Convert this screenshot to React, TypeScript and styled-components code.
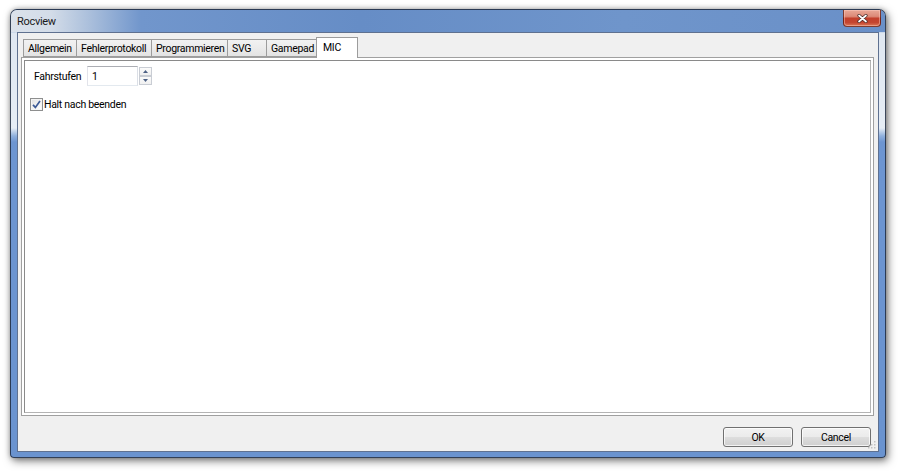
import React from 'react';
import styled, { createGlobalStyle } from 'styled-components';

const Global = createGlobalStyle`
  html, body { margin: 0; padding: 0; background: #ffffff; }
  body {
    font-family: Roboto, "Liberation Sans", sans-serif;
    font-size: 10.5px;
    letter-spacing: -0.3px;
    color: #000;
  }
  * { box-sizing: border-box; }
`;

const Page = styled.div`
  width: 900px;
  height: 472px;
  overflow: hidden;
  padding: 9px 0 0 10px;
`;

const Window = styled.div`
  width: 876px;
  height: 449px;
  display: flex;
  flex-direction: column;
  border: 1px solid rgba(30, 42, 62, 0.85);
  border-radius: 7px 7px 4px 4px;
  background: linear-gradient(
    180deg,
    #9fb6d6 0px,
    #b9cbe2 22px,
    #dfe7f1 23px,
    #e6edf5 118px,
    #8fb0dd 126px,
    #6d95d1 132px,
    #6a93cf 100%
  );
  box-shadow: 2px 3px 9px rgba(0, 0, 0, 0.5), 0 0 5px rgba(0, 0, 0, 0.25);
`;

const TitleBar = styled.div`
  height: 22px;
  flex: none;
  display: flex;
  align-items: flex-start;
  justify-content: space-between;
  border-radius: 6px 6px 0 0;
  background: linear-gradient(
    90deg,
    #dbe2eb 0px,
    #d3dce8 40px,
    #a9bedb 80px,
    #7196cc 130px,
    #668dc6 40%,
    #6f95cb 70%,
    #6a90c8 100%
  );
`;

const Title = styled.span`
  padding: 5px 0 0 6px;
  font-size: 11px;
  color: #1a1a1a;
`;

const CloseButton = styled.div`
  width: 38px;
  height: 17px;
  margin-right: 4px;
  display: flex;
  align-items: center;
  justify-content: center;
  border: 1px solid rgba(90, 25, 15, 0.75);
  border-top: none;
  border-radius: 0 0 4px 4px;
  background: linear-gradient(
    180deg,
    #e9a897 0%,
    #dc8a78 40%,
    #c3402c 52%,
    #c44530 78%,
    #dc7656 100%
  );
  box-shadow: inset 0 0 0 1px rgba(255, 210, 200, 0.45);
`;

const Middle = styled.div`
  flex: 1;
  display: flex;
  padding: 0 6px 5px 6px;
`;

const Client = styled.div`
  position: relative;
  width: 862px;
  height: 420px;
  border: 1px solid #5f7190;
  background: #f0f0f0;
  padding: 4px 4px 0 3px;
  display: flex;
  flex-direction: column;
`;

const TabBar = styled.div`
  height: 20px;
  display: flex;
  align-items: flex-end;
  padding-left: 2px;
  position: relative;
  z-index: 1;
`;

const Tab = styled.div<{ $w: number; $active?: boolean }>`
  width: ${p => p.$w}px;
  height: ${p => (p.$active ? 21 : 18)}px;
  margin-bottom: ${p => (p.$active ? -1 : 0)}px;
  margin-left: -1px;
  &:first-child { margin-left: 0; }
  padding: ${p => (p.$active ? '3px 0 0 6px' : '2px 0 0 4px')};
  border: 1px solid #9c9c9c;
  border-bottom: ${p => (p.$active ? 'none' : '1px solid #9c9c9c')};
  background: ${p =>
    p.$active ? '#ffffff' : 'linear-gradient(180deg, #f2f2f2 0%, #ebebeb 50%, #e3e3e3 100%)'};
  position: relative;
  z-index: ${p => (p.$active ? 2 : 1)};
  white-space: nowrap;
  color: #000;
`;

const Pane = styled.div`
  height: 359px;
  flex: none;
  border: 1px solid #a0a0a0;
  background: #ffffff;
  padding: 2px;
  display: flex;
`;

const PaneInner = styled.div`
  flex: 1;
  border: 1px solid;
  border-color: #8a8a8a #b4b4b4 #b4b4b4 #8a8a8a;
  padding: 5px 0 0 5px;
  display: flex;
  flex-direction: column;
`;

const FieldRow = styled.div`
  display: flex;
  align-items: center;
  margin-left: 4px;
  height: 20px;
`;

const Label = styled.span`
  width: 53px;
  color: #000;
`;

const SpinEdit = styled.div`
  width: 51px;
  height: 20px;
  border: 1px solid;
  border-color: #abadb3 #dbdfe6 #e3e9ef #e2e3ea;
  background: #fff;
  padding: 3px 0 0 4px;
  color: #000;
`;

const SpinButtons = styled.div`
  margin-left: 1px;
  height: 18px;
  width: 13px;
  display: flex;
  flex-direction: column;
`;

const SpinButton = styled.div`
  flex: 1;
  border: 1px solid #c9cdd4;
  background: linear-gradient(180deg, #fbfbfb 0%, #f0f0f0 100%);
  display: flex;
  align-items: center;
  justify-content: center;
`;

const CheckRow = styled.div`
  display: flex;
  align-items: center;
  margin-top: 12px;
  height: 13px;
`;

const CheckBox = styled.div`
  width: 13px;
  height: 13px;
  border: 1px solid #8e8f8f;
  background: linear-gradient(135deg, #e0e0e0 0%, #f4f4f4 60%, #ffffff 100%);
  box-shadow: inset 0 0 0 1px #f4f4f4;
  display: flex;
  align-items: center;
  justify-content: center;
`;

const CheckLabel = styled.span`
  margin-left: 1px;
  color: #000;
`;

const ButtonRow = styled.div`
  height: 35px;
  display: flex;
  justify-content: flex-end;
  align-items: flex-start;
  gap: 8px;
  padding: 11px 3px 0 0;
`;

const Button = styled.div`
  width: 70px;
  height: 20px;
  border: 1px solid #707070;
  border-radius: 3px;
  background: linear-gradient(180deg, #f2f2f2 0%, #ebebeb 48%, #dddddd 52%, #cfcfcf 100%);
  box-shadow: inset 0 0 0 1px rgba(255, 255, 255, 0.75);
  display: flex;
  align-items: center;
  justify-content: center;
  color: #000;
`;

const Grip = styled.svg`
  position: absolute;
  right: 2px;
  bottom: 2px;
`;

const tabs = [
  { label: 'Allgemein', w: 54 },
  { label: 'Fehlerprotokoll', w: 76 },
  { label: 'Programmieren', w: 77 },
  { label: 'SVG', w: 40 },
  { label: 'Gamepad', w: 51 },
  { label: 'MIC', w: 42, active: true },
];

export default function App() {
  return (
    <Page>
      <Global />
      <Window>
        <TitleBar>
          <Title>Rocview</Title>
          <CloseButton>
            <svg width="11" height="9" viewBox="0 0 11 9">
              <path d="M2 1.5 L9 7.5 M9 1.5 L2 7.5" stroke="#4a2a28" strokeWidth="3.2" strokeLinecap="round" />
              <path d="M2 1.5 L9 7.5 M9 1.5 L2 7.5" stroke="#ffffff" strokeWidth="1.7" strokeLinecap="round" />
            </svg>
          </CloseButton>
        </TitleBar>
        <Middle>
          <Client>
            <TabBar>
              {tabs.map(t => (
                <Tab key={t.label} $w={t.w} $active={t.active}>
                  {t.label}
                </Tab>
              ))}
            </TabBar>
            <Pane>
              <PaneInner>
                <FieldRow>
                  <Label>Fahrstufen</Label>
                  <SpinEdit>1</SpinEdit>
                  <SpinButtons>
                    <SpinButton>
                      <svg width="5" height="3" viewBox="0 0 5 3">
                        <path d="M0 3 L2.5 0 L5 3 Z" fill="#4d6185" />
                      </svg>
                    </SpinButton>
                    <SpinButton>
                      <svg width="5" height="3" viewBox="0 0 5 3">
                        <path d="M0 0 L2.5 3 L5 0 Z" fill="#4d6185" />
                      </svg>
                    </SpinButton>
                  </SpinButtons>
                </FieldRow>
                <CheckRow>
                  <CheckBox>
                    <svg width="9" height="9" viewBox="0 0 9 9">
                      <path d="M1 4.8 L3.4 7.4 L8 1" stroke="#3c5a96" strokeWidth="1.7" fill="none" />
                    </svg>
                  </CheckBox>
                  <CheckLabel>Halt nach beenden</CheckLabel>
                </CheckRow>
              </PaneInner>
            </Pane>
            <ButtonRow>
              <Button>OK</Button>
              <Button>Cancel</Button>
            </ButtonRow>
            <Grip width="8" height="8" viewBox="0 0 8 8">
              <rect x="6" y="0" width="1.5" height="1.5" fill="#c2c2c2" />
              <rect x="3" y="3" width="1.5" height="1.5" fill="#c2c2c2" />
              <rect x="6" y="3" width="1.5" height="1.5" fill="#c2c2c2" />
              <rect x="0" y="6" width="1.5" height="1.5" fill="#c2c2c2" />
              <rect x="3" y="6" width="1.5" height="1.5" fill="#c2c2c2" />
              <rect x="6" y="6" width="1.5" height="1.5" fill="#c2c2c2" />
            </Grip>
          </Client>
        </Middle>
      </Window>
    </Page>
  );
}
